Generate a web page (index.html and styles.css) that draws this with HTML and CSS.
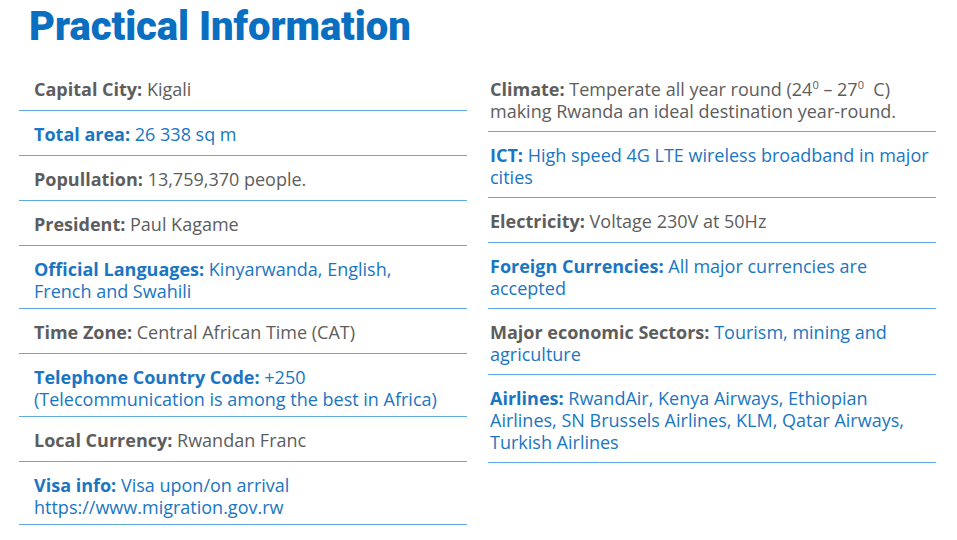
FILE: index.html
```html
<!DOCTYPE html>
<html lang="en">
<head>
<meta charset="utf-8">
<title>Practical Information</title>
<link rel="stylesheet" href="styles.css">
</head>
<body>
<main class="page">
  <h1 class="title">Practical Information</h1>
  <div class="columns">
    <section class="col col-left">
      <div class="row gray"><b>Capital City:</b> Kigali</div>
      <div class="row blue"><b>Total area:</b> 26 338 sq m</div>
      <div class="row gray"><b>Popullation:</b> 13,759,370 people.</div>
      <div class="row gray"><b>President:</b> Paul Kagame</div>
      <div class="row blue"><b>Official Languages:</b> Kinyarwanda, English,<br>French and Swahili</div>
      <div class="row gray"><b>Time Zone:</b> Central African Time (CAT)</div>
      <div class="row blue"><b>Telephone Country Code:</b> +250<br>(Telecommunication is among the best in Africa)</div>
      <div class="row gray"><b>Local Currency:</b> Rwandan Franc</div>
      <div class="row blue"><b>Visa info:</b> Visa upon/on arrival<br>https://www.migration.gov.rw</div>
    </section>
    <section class="col col-right">
      <div class="row gray"><b>Climate:</b> Temperate all year round (24<sup>0</sup> – 27<sup>0</sup>&nbsp; C)<br>making Rwanda an ideal destination year-round.</div>
      <div class="row blue"><b>ICT:</b> High speed 4G LTE wireless broadband in major<br>cities</div>
      <div class="row gray"><b>Electricity:</b> Voltage 230V at 50Hz</div>
      <div class="row blue"><b>Foreign Currencies:</b> All major currencies are<br>accepted</div>
      <div class="row gray"><b>Major economic Sectors:</b> <span class="bluetext">Tourism, mining and<br>agriculture</span></div>
      <div class="row blue"><b>Airlines:</b> RwandAir, Kenya Airways, Ethiopian<br>Airlines, SN Brussels Airlines, KLM, Qatar Airways,<br>Turkish Airlines</div>
    </section>
  </div>
</main>
</body>
</html>
```
FILE: styles.css
```css
html, body {
  margin: 0;
  padding: 0;
  background: #ffffff;
}

.page {
  width: 957px;
  height: 540px;
  overflow: hidden;
  font-family: "Open Sans", "Liberation Sans", sans-serif;
}

.title {
  margin: 0;
  padding: 3px 0 0 29px;
  height: 66px;
  box-sizing: border-box;
  font-family: Roboto, "Liberation Sans", sans-serif;
  font-weight: 900;
  font-size: 40px;
  line-height: 48px;
  letter-spacing: -0.05px;
  color: #0a6fc0;
}

.columns {
  display: grid;
  grid-template-columns: 448px 448px;
  column-gap: 21px;
  padding-left: 19px;
}

.row {
  box-sizing: border-box;
  min-height: 45px;
  border-bottom: 1px solid #5ca9e4;
  font-size: 18px;
  line-height: 22px;
}

.col-left .row {
  padding: 12px 0 6px 15px;
}

.col-right .row {
  padding: 12px 0 9px 2px;
}

.row b {
  font-weight: 700;
}

.gray {
  color: #5d5d5d;
}

.blue {
  color: #1a76c2;
}

.bluetext {
  color: #1a76c2;
}

sup {
  font-size: 11px;
  line-height: 0;
  vertical-align: 7px;
}
```
